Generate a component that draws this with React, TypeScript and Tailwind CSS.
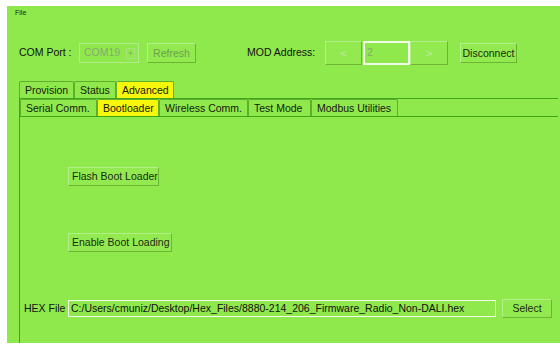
import type { ReactNode } from "react";

const font = { fontFamily: '"Liberation Sans", Arial, sans-serif' };

function Btn({
  children,
  className = "",
  tone = "text-[#1b2a12]",
}: {
  children: ReactNode;
  className?: string;
  tone?: string;
}) {
  return (
    <div
      className={`flex items-center justify-center shrink-0 border border-t-[#b4f08a] border-l-[#b4f08a] border-b-[#6cb634] border-r-[#6cb634] bg-[#92ea50] text-[10.5px] leading-none ${tone} ${className}`}
    >
      {children}
    </div>
  );
}

function Tab({ label, active = false, className = "" }: { label: string; active?: boolean; className?: string }) {
  return (
    <div
      className={`h-[17px] shrink-0 flex items-center pl-[5px] border border-b-0 border-[#5fae2c] rounded-t-[2px] text-[10.5px] leading-none text-[#142010] ${
        active ? "bg-[#f7f70c]" : "bg-[#8fe84c]"
      } ${className}`}
    >
      {label}
    </div>
  );
}

export default function App() {
  return (
    <div className="w-[560px] h-[347px] bg-white overflow-hidden" style={font}>
      <div className="ml-[7px] mt-[6px] w-[553px] h-[337px] bg-[#8fe84c] flex flex-col">
        {/* Menu */}
        <div className="h-[14px] pl-[8px] pt-[3px] text-[7px] leading-none text-[#222]">File</div>

        {/* Toolbar */}
        <div className="mt-[20px] h-[26px] flex items-center pl-[12px]">
          <span className="text-[10.5px] text-[#111] w-[60px] shrink-0">COM Port :</span>
          <div className="w-[60px] h-[20px] shrink-0 border border-[#b2ec8a] flex items-center pl-[4px] text-[10.5px] text-[#86aa6c] relative">
            COM19
            <div className="absolute right-[3px] top-[4px] w-[9px] h-[11px] border border-[#a8e27e] flex items-center justify-center text-[6px] text-[#86aa6c]">
              ▾
            </div>
          </div>
          <Btn tone="text-[#6a9e4c]" className="ml-[8px] w-[49px] h-[20px]">Refresh</Btn>
          <span className="ml-[51px] w-[78px] shrink-0 text-[10.5px] text-[#111]">MOD Address:</span>
          <Btn tone="text-[#c4e6ad]" className="w-[37px] h-[24px] text-[11px]">&lt;</Btn>
          <div className="ml-[1px] w-[47px] h-[24px] shrink-0 border-2 border-[#f2fbe9] flex items-center pl-[2px] text-[10.5px] text-[#8aa876]">
            2
          </div>
          <Btn tone="text-[#c4e6ad]" className="w-[38px] h-[24px] text-[11px]">&gt;</Btn>
          <Btn className="ml-[12px] w-[57px] h-[20px]">Disconnect</Btn>
        </div>

        {/* Top tabs */}
        <div className="mt-[15px] ml-[12px] flex">
          <Tab label="Provision" className="w-[55px]" />
          <Tab label="Status" className="w-[42px]" />
          <Tab label="Advanced" active className="w-[58px]" />
        </div>

        {/* Outer pane */}
        <div className="ml-[12px] w-[539px] flex-1 border-t border-l border-[#3fa61c] flex flex-col">
          <div className="flex">
            <Tab label="Serial Comm." className="w-[77px]" />
            <Tab label="Bootloader" active className="w-[62px]" />
            <Tab label="Wireless Comm." className="w-[89px]" />
            <Tab label="Test Mode" className="w-[63px]" />
            <Tab label="Modbus Utilities" className="w-[87px] border-b border-b-[#c7f5a6]" />
          </div>

          {/* Inner pane */}
          <div className="flex-1 border-t border-[#3fa61c] flex flex-col pl-[4px]">
            <Btn className="ml-[44px] mt-[50px] w-[91px] h-[19px] justify-start pl-[3px]">Flash Boot Loader</Btn>
            <Btn className="ml-[44px] mt-[47px] w-[104px] h-[19px] justify-start pl-[3px]">Enable Boot Loading</Btn>

            <div className="mt-[47px] h-[19px] flex items-center">
              <span className="w-[44px] shrink-0 text-[10.5px] text-[#111]">HEX File</span>
              <div className="w-[428px] h-[17px] shrink-0 border border-[#f2fbe9] flex items-center pl-[2px] text-[10.5px] text-[#111] whitespace-nowrap overflow-hidden">
                C:/Users/cmuniz/Desktop/Hex_Files/8880-214_206_Firmware_Radio_Non-DALI.hex
              </div>
              <Btn className="ml-[6px] w-[50px] h-[19px]">Select</Btn>
            </div>
          </div>
        </div>
      </div>
    </div>
  );
}
